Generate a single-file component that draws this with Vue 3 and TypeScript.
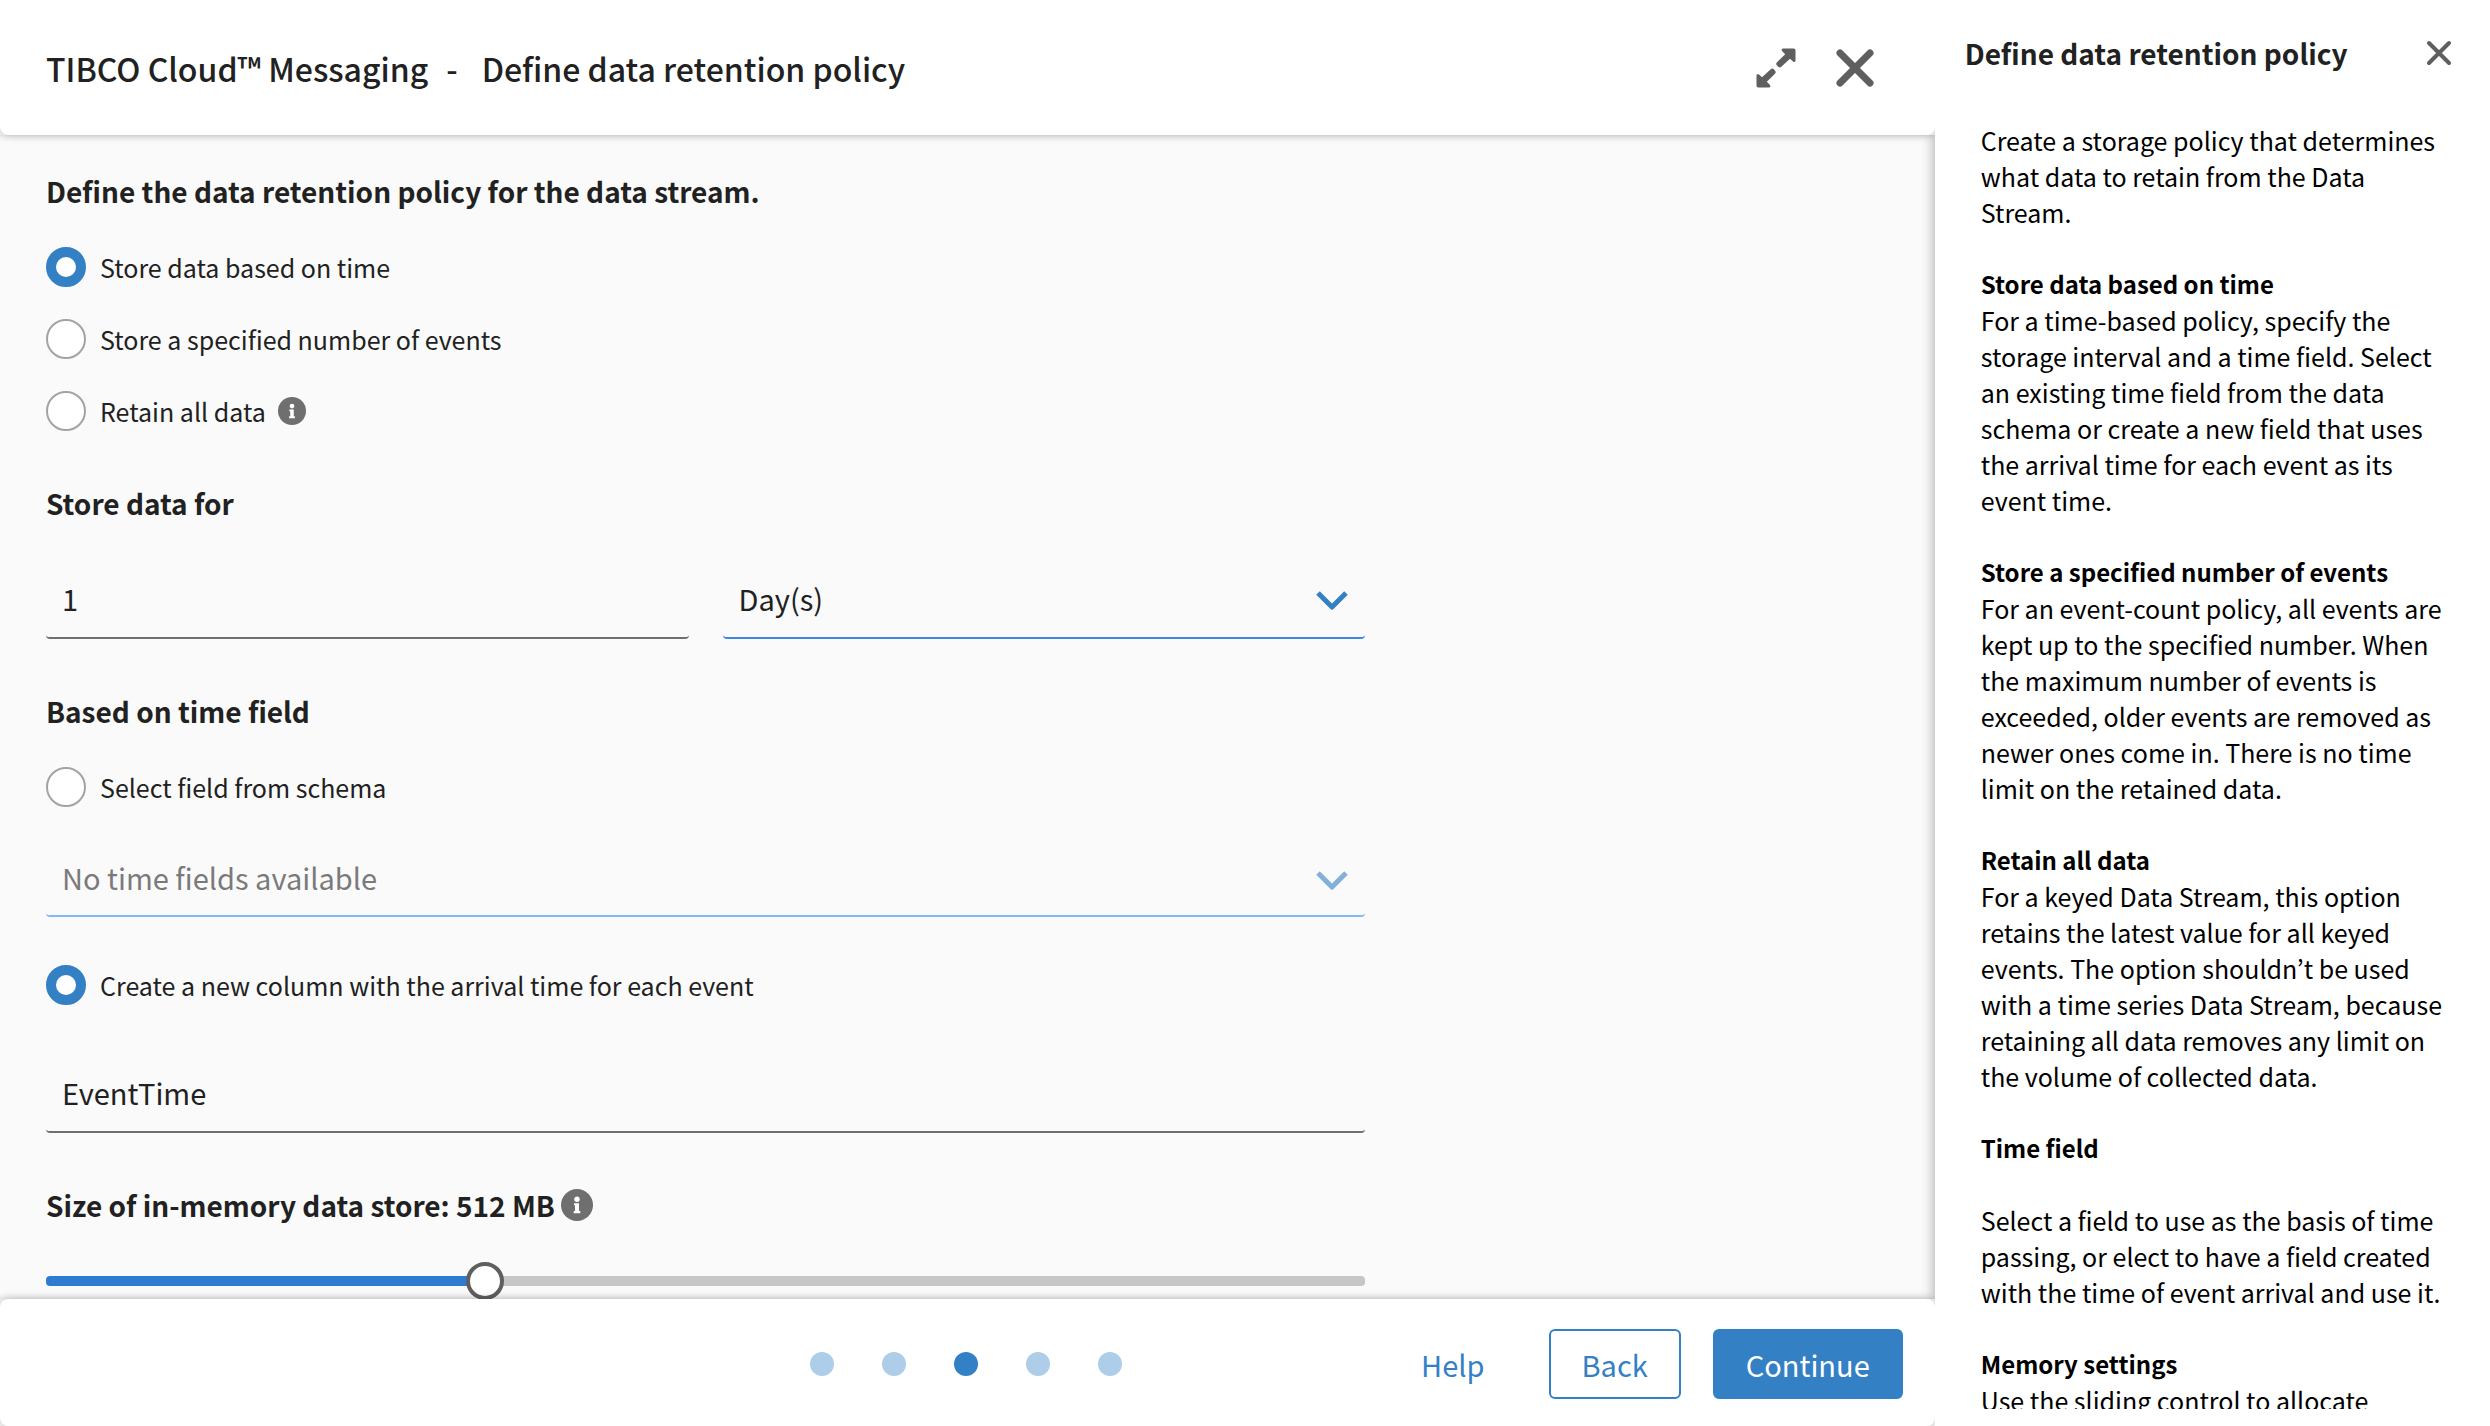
<script setup lang="ts">
import { ref } from 'vue'

interface HelpSection {
  title: string
  text: string
}

const policies = ['Store data based on time', 'Store a specified number of events', 'Retain all data']
const policy = ref(0)
const timeSource = ref('create')
const amount = ref('1')
const column = ref('EventTime')
const size = ref(512)
const steps = [1, 2, 3, 4, 5]
const currentStep = 3

const sections: HelpSection[] = [
  {
    title: 'Store data based on time',
    text: 'For a time-based policy, specify the storage interval and a time field. Select an existing time field from the data schema or create a new field that uses the arrival time for each event as its event time.',
  },
  {
    title: 'Store a specified number of events',
    text: 'For an event-count policy, all events are kept up to the specified number. When the maximum number of events is exceeded, older events are removed as newer ones come in. There is no time limit on the retained data.',
  },
  {
    title: 'Retain all data',
    text: 'For a keyed Data Stream, this option retains the latest value for all keyed events. The option shouldn’t be used with a time series Data Stream, because retaining all data removes any limit on the volume of collected data.',
  },
]
</script>

<template>
  <div class="shell">
    <div class="wizard">
      <header class="head">
        <h1><span>TIBCO Cloud™ Messaging</span><span>-</span><span>Define data retention policy</span></h1>
        <div class="head-actions">
          <button class="icon-btn" type="button" aria-label="Expand">
            <svg width="40" height="40" viewBox="0 0 40 40" fill="#5f5f5f">
              <path id="arrow" d="M27 0.500H37.500Q39.500 0.500 39.500 2.500V12.500Q39 15 37 13.500L34 10.800L25 19Q23.500 20 22 18.500L20.800 17.200Q19.500 15.500 21 14.200L29.200 6.300L26 3Q24.800 1 27 0.500Z" />
              <use href="#arrow" transform="rotate(180 20 20)" />
            </svg>
          </button>
          <button class="icon-btn" type="button" aria-label="Close">
            <svg width="38" height="38" viewBox="0 0 38 38" fill="none" stroke="#5f5f5f" stroke-width="7" stroke-linecap="round">
              <path d="M4 4L34 34M34 4L4 34" />
            </svg>
          </button>
        </div>
      </header>

      <main class="body">
        <div class="form">
          <h2 class="lead">Define the data retention policy for the data stream.</h2>
          <div v-for="(name, i) in policies" :key="name" class="choice">
            <label><input v-model="policy" type="radio" name="policy" :value="i" />{{ name }}</label>
            <svg v-if="i === 2" width="28" height="28" viewBox="0 0 32 32">
              <circle cx="16" cy="16" r="16" fill="#6f6f6f" />
              <circle cx="16" cy="10.300" r="2.700" fill="#fff" />
              <path fill="#fff" d="M13 14.300H18V22H19.300V24.300H12.700V22H14V16.300H13Z" />
            </svg>
          </div>

          <h2 class="gap-top">Store data for</h2>
          <div class="pair">
            <input v-model="amount" class="field" type="text" aria-label="Store data for" />
            <div class="drop">
              <select class="field" aria-label="Time unit"><option>Day(s)</option></select>
              <svg class="chevron" width="32" height="20" viewBox="0 0 32 20" fill="none" stroke="#3480c5" stroke-width="5"><path d="M2 2L16 16L30 2" stroke-linejoin="round" /></svg>
            </div>
          </div>

          <h2 class="gap-top lead">Based on time field</h2>
          <div class="choice">
            <label><input v-model="timeSource" type="radio" name="source" value="schema" />Select field from schema</label>
          </div>
          <div class="drop off">
            <select class="field" aria-label="Time field" disabled><option>No time fields available</option></select>
            <svg class="chevron" width="32" height="20" viewBox="0 0 32 20" fill="none" stroke="#3480c5" stroke-width="5"><path d="M2 2L16 16L30 2" stroke-linejoin="round" /></svg>
          </div>
          <div class="choice create">
            <label><input v-model="timeSource" type="radio" name="source" value="create" />Create a new column with the arrival time for each event</label>
          </div>
          <input v-model="column" class="field" type="text" aria-label="Column name" />

          <div class="memory">
            <label for="size">Size of in-memory data store: {{ size }} MB</label>
            <svg width="32" height="32" viewBox="0 0 32 32">
              <circle cx="16" cy="16" r="16" fill="#6f6f6f" />
              <circle cx="16" cy="10.300" r="2.700" fill="#fff" />
              <path fill="#fff" d="M13 14.300H18V22H19.300V24.300H12.700V22H14V16.300H13Z" />
            </svg>
          </div>
          <input id="size" v-model.number="size" class="slider" type="range" min="0" max="1560" />
        </div>
      </main>

      <footer class="foot">
        <span></span>
        <div class="dots"><i v-for="s in steps" :key="s" :class="{ on: s === currentStep }"></i></div>
        <div class="foot-actions">
          <a href="#">Help</a>
          <button class="btn" type="button">Back</button>
          <button class="btn primary" type="button">Continue</button>
        </div>
      </footer>
    </div>

    <aside class="help">
      <div class="help-head">
        <h2>Define data retention policy</h2>
        <button class="icon-btn" type="button" aria-label="Close help">
          <svg width="26" height="26" viewBox="0 0 26 26" fill="none" stroke="#5f5f5f" stroke-width="4" stroke-linecap="round"><path d="M3 3L23 23M23 3L3 23" /></svg>
        </button>
      </div>
      <div class="help-body">
        <p>Create a storage policy that determines what data to retain from the Data Stream.</p>
        <section v-for="s in sections" :key="s.title">
          <h3>{{ s.title }}</h3>
          <p>{{ s.text }}</p>
        </section>
        <h3>Time field</h3>
        <p>Select a field to use as the basis of time passing, or elect to have a field created with the time of event arrival and use it.</p>
        <section>
          <h3>Memory settings</h3>
          <p>Use the sliding control to allocate</p>
        </section>
      </div>
    </aside>
  </div>
</template>

<style>
body {
  overflow: hidden;
}
</style>

<style scoped>
* {
  box-sizing: border-box;
}
.shell {
  display: flex;
  height: 100vh;
  background: #fff;
  color: #212121;
  font-family: 'Noto Sans CJK KR', 'Noto Sans', sans-serif;
  font-size: 25px;
}
h1,
h2,
h3,
p {
  margin: 0;
}
.wizard {
  flex: 1;
  min-width: 0;
  display: flex;
  flex-direction: column;
  background: #fafafa;
}
.head {
  position: relative;
  z-index: 1;
  flex: none;
  display: flex;
  align-items: center;
  justify-content: space-between;
  height: 135px;
  padding: 0 61px 0 46px;
  background: #fff;
  border-radius: 0 0 8px 8px;
  box-shadow: 0 0 8px rgba(0, 0, 0, 0.28);
}
h1 {
  display: flex;
  font-size: 32px;
  line-height: 46px;
  font-weight: 500;
}
h1 span + span {
  margin-left: 18px;
}
h1 span:last-child {
  margin-left: 24px;
}
.head-actions {
  display: flex;
  align-items: center;
  gap: 40px;
}
button,
input,
select {
  font: inherit;
  color: inherit;
}
.icon-btn {
  display: flex;
  padding: 0;
  border: 0;
  background: none;
}
.body {
  flex: 1;
  min-height: 0;
  overflow: hidden;
  padding: 32px 46px 0;
  box-shadow: inset -8px 0 12px -6px rgba(0, 0, 0, 0.28);
}
.form {
  width: 72%;
  max-width: 1319px;
}
h2 {
  font-size: 28px;
  line-height: 48px;
  font-weight: 700;
}
.lead {
  margin-bottom: 16px;
}
.choice {
  display: flex;
  align-items: center;
  gap: 12px;
  height: 72px;
}
.choice label {
  display: flex;
  align-items: center;
  gap: 14px;
}
.choice input {
  appearance: none;
  width: 40px;
  height: 40px;
  margin: 0;
  border: 2px solid #a3a3a3;
  border-radius: 50%;
  background: #fff;
}
.choice input:checked {
  border: 10px solid #3480c5;
}
.gap-top {
  margin-top: 32px;
}
.pair {
  display: grid;
  grid-template-columns: 1fr 1fr;
  gap: 34px;
  margin: 32px 0 48px;
}
.field {
  display: block;
  appearance: none;
  width: 100%;
  height: 80px;
  padding: 0 16px;
  border: 0;
  border-bottom: 2px solid #6f6f6f;
  border-radius: 4px;
  background: transparent;
  font-size: 29px;
  outline: none;
}
.drop {
  position: relative;
}
.drop .field {
  border-color: #3c86ee;
  opacity: 1;
}
.chevron {
  position: absolute;
  right: 17px;
  top: 32px;
}
.off {
  margin-top: 16px;
}
.off .field {
  height: 78px;
  color: #7a7a7a;
  border-color: #85b6f8;
}
.off .chevron {
  opacity: 0.6;
}
.create {
  margin: 32px 0;
}
.memory {
  display: flex;
  align-items: center;
  gap: 6px;
  margin-top: 48px;
  font-size: 28px;
  line-height: 48px;
  font-weight: 700;
}
.slider {
  display: block;
  appearance: none;
  width: 100%;
  height: 40px;
  margin: 32px 0 60px;
  background: none;
}
.slider::-webkit-slider-runnable-track {
  height: 10px;
  border-radius: 4px;
  background: linear-gradient(90deg, #2e7bd2 33%, #c6c6c6 33%);
}
.slider::-webkit-slider-thumb {
  appearance: none;
  width: 38px;
  height: 38px;
  margin-top: -14px;
  border: 4px solid #5f5f5f;
  border-radius: 50%;
  background: #fff;
}
.foot {
  position: relative;
  z-index: 1;
  flex: none;
  display: grid;
  grid-template-columns: 1fr auto 1fr;
  align-items: center;
  height: 127px;
  padding: 3px 32px 0 29px;
  background: #fff;
  border-radius: 8px;
  box-shadow: 0 0 8px rgba(0, 0, 0, 0.28);
}
.dots {
  display: flex;
  gap: 48px;
}
.dots i {
  width: 24px;
  height: 24px;
  border-radius: 50%;
  background: #aecde9;
}
.dots .on {
  background: #3480c5;
}
.foot-actions {
  display: flex;
  align-items: center;
  justify-content: flex-end;
  gap: 32px;
  font-size: 29px;
}
.foot-actions a {
  margin-right: 32px;
  color: #3480c5;
  text-decoration: none;
}
.btn {
  height: 70px;
  padding: 0 31px;
  border: 2px solid #3480c5;
  border-radius: 6px;
  background: #fff;
  color: #3480c5;
}
.primary {
  background: #3480c5;
  color: #fff;
}
.help {
  position: relative;
  z-index: 2;
  flex: none;
  width: 22.3%;
  display: flex;
  flex-direction: column;
  padding-bottom: 17px;
  background: #fff;
  color: #000;
}
.help-head {
  display: flex;
  align-items: center;
  justify-content: space-between;
  height: 106px;
  padding: 0 38px 0 30px;
  color: #212121;
}
.help-body {
  flex: 1;
  min-height: 0;
  overflow: hidden;
  margin: 16px 40px 0 46px;
  line-height: 36px;
}
.help-body h3 {
  margin-top: 36px;
  font-size: 24px;
  font-weight: 700;
}
.help-body > h3 + p {
  margin-top: 36px;
}
</style>
